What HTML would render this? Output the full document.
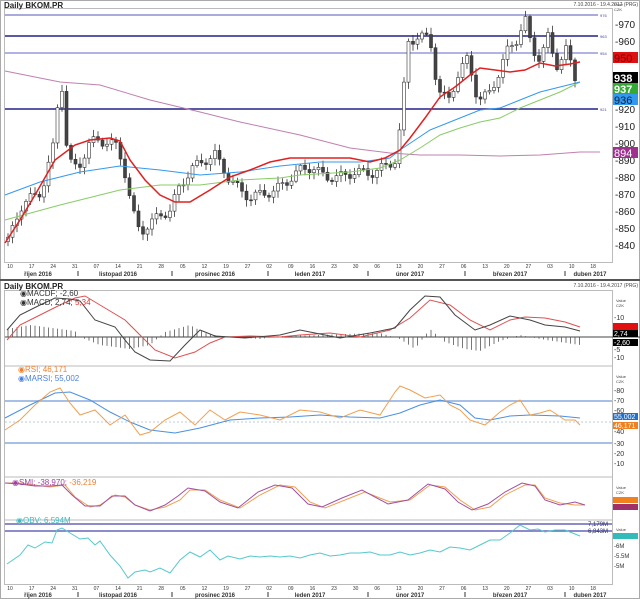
<!DOCTYPE html>
<html><head><meta charset="utf-8"><style>
body{margin:0;background:#fff;width:640px;height:599px;overflow:hidden;font-family:"Liberation Sans",sans-serif}
svg{display:block}
text{font-family:"Liberation Sans",sans-serif}
</style></head><body>
<svg id="s" width="640" height="599" xmlns="http://www.w3.org/2000/svg">
<rect width="640" height="599" fill="#fff"/>
<rect x="0.5" y="0.5" width="639" height="598" fill="none" stroke="#aaa"/>
<line x1="0" y1="280" x2="640" y2="280" stroke="#555" stroke-width="2"/>
<rect x="4.5" y="8.5" width="608" height="254" fill="none" stroke="#bbb"/>
<rect x="4.5" y="290.5" width="608" height="294" fill="none" stroke="#bbb"/>
<line x1="4" y1="366" x2="612" y2="366" stroke="#bbb"/>
<line x1="4" y1="477" x2="612" y2="477" stroke="#bbb"/>
<line x1="4" y1="520" x2="612" y2="520" stroke="#bbb"/>
<text x="4" y="8" font-size="8" font-weight="bold" fill="#222">Daily BKOM.PR</text>
<text x="4" y="289" font-size="8" font-weight="bold" fill="#222">Daily BKOM.PR</text>
<text x="638" y="6" font-size="5" fill="#444" text-anchor="end">7.10.2016 - 19.4.2017 (PRG)</text>
<text x="638" y="287" font-size="5" fill="#444" text-anchor="end">7.10.2016 - 19.4.2017 (PRG)</text>
<line x1="5" y1="15" x2="598" y2="15" stroke="#5555bb" stroke-width="1"/>
<line x1="5" y1="36" x2="598" y2="36" stroke="#222288" stroke-width="1.5"/>
<line x1="5" y1="53" x2="598" y2="53" stroke="#6666cc" stroke-width="1"/>
<line x1="5" y1="109" x2="598" y2="109" stroke="#222288" stroke-width="1.5"/>
<text x="600" y="17" font-size="4" fill="#44a">976</text>
<text x="600" y="38" font-size="4" fill="#44a">963</text>
<text x="600" y="55" font-size="4" fill="#44a">954</text>
<text x="600" y="111" font-size="4" fill="#44a">921</text>
<g id="price"></g>
<g id="axis"></g>
<polyline fill="none" stroke="#c080b0" stroke-width="1" points="5,71 60,82 100,85 150,100 200,112 240,122 300,135 350,148 390,153 420,155 460,155 500,156 540,155 580,152 600,152"/>
<polyline fill="none" stroke="#88cc66" stroke-width="1" points="5,220 60,205 120,190 160,185 200,185 240,180 280,178 300,175 350,172 380,168 400,160 420,148 440,135 460,128 480,122 500,118 520,108 540,100 560,92 580,82"/>
<polyline fill="none" stroke="#3399ee" stroke-width="1" points="5,195 40,182 80,172 120,166 160,170 200,175 240,172 280,166 320,162 360,162 390,158 400,150 415,140 430,130 445,124 460,118 480,110 500,108 520,100 540,92 560,87 580,82"/>
<polyline fill="none" stroke="#e02020" stroke-width="1.5" points="5,243 20,220 35,195 55,160 75,145 90,140 110,138 120,141 130,160 145,180 160,195 175,202 190,202 210,190 230,177 250,170 270,162 290,158 310,158 330,158 350,158 370,162 385,158 400,150 410,138 425,118 440,97 455,87 470,75 480,68 495,70 510,72 525,70 540,63 555,66 570,64 580,62"/>
<g font-size="10" fill="#222">
<text x="615" y="28">-970</text><text x="615" y="45">-960</text><text x="615" y="113">-920</text><text x="615" y="130">-910</text><text x="615" y="147">-900</text><text x="615" y="164">-890</text><text x="615" y="181">-880</text><text x="615" y="198">-870</text><text x="615" y="215">-860</text><text x="615" y="232">-850</text><text x="615" y="249">-840</text>
</g>
<text x="614" y="6" font-size="4" fill="#444">Price</text><text x="614" y="11" font-size="4" fill="#444">CZK</text>
<rect x="613" y="52" width="25" height="11" fill="#dd1111"/><text x="614" y="62" font-size="11" fill="#800">950</text>
<rect x="613" y="72" width="25" height="11" fill="#000"/><text x="614" y="82" font-size="11" fill="#fff" font-weight="bold">938</text>
<rect x="613" y="83" width="25" height="11" fill="#33aa33"/><text x="614" y="93" font-size="11" fill="#fff" font-weight="bold">937</text>
<rect x="613" y="94" width="25" height="11" fill="#3399ee"/><text x="614" y="104" font-size="11" fill="#024">936</text>
<rect x="613" y="147" width="25" height="11" fill="#a03090"/><text x="614" y="157" font-size="11" fill="#fff">894</text>

<line x1="5" y1="337" x2="640" y2="337" stroke="#444"/>
<g id="hist"></g>
<polyline fill="none" stroke="#e05050" stroke-width="1" points="7,340 20,325 40,315 60,305 75,298 85,296 100,305 125,320 140,335 155,350 175,358 195,352 210,343 225,337 250,336 280,337 300,335 330,333 360,337 390,330 410,318 430,300 450,305 470,320 490,330 510,320 525,317 545,318 565,322 580,327"/>
<polyline fill="none" stroke="#444" stroke-width="1" points="7,330 20,315 40,305 55,298 70,299 80,301 95,320 115,327 125,340 135,352 150,360 170,361 185,345 200,330 215,336 245,338 280,335 300,330 320,334 340,338 370,333 395,328 410,310 425,296 440,297 455,315 475,330 490,325 510,316 530,320 545,325 565,327 580,331"/>
<text x="20" y="296" font-size="8" fill="#333">◉MACDF; -2,60</text>
<text x="20" y="305" font-size="8" fill="#333">◉MACD; 2,74; <tspan fill="#e03030">5,34</tspan></text>
<text x="616" y="302" font-size="4" fill="#444">Value</text><text x="616" y="307" font-size="4" fill="#444">CZK</text>
<text x="614" y="320" font-size="7" fill="#333">-10</text>
<rect x="613" y="323" width="25" height="7" fill="#e01010"/>
<rect x="613" y="330" width="25" height="7" fill="#000"/><text x="614" y="336" font-size="7" fill="#fff">2,74</text>
<rect x="613" y="339" width="25" height="7" fill="#000"/><text x="614" y="345" font-size="7" fill="#fff">-2,60</text>
<text x="614" y="352" font-size="7" fill="#333">-5</text><text x="614" y="360" font-size="7" fill="#333">-10</text>

<line x1="5" y1="401" x2="612" y2="401" stroke="#88aadd" stroke-width="1.5"/>
<line x1="5" y1="443" x2="612" y2="443" stroke="#88aadd" stroke-width="1.5"/>
<line x1="5" y1="422" x2="612" y2="422" stroke="#bcd" stroke-dasharray="2,2"/>
<polyline fill="none" stroke="#4a90e0" stroke-width="1" points="5,418 30,405 55,393 70,392 90,400 110,412 130,422 150,430 175,433 200,428 230,420 260,418 290,417 320,415 350,417 380,418 400,413 420,405 440,400 460,405 475,418 490,420 510,416 530,415 560,416 580,418"/>
<polyline fill="none" stroke="#f0a050" stroke-width="1" points="5,430 20,420 35,405 50,392 60,388 70,403 80,415 95,410 110,425 125,415 140,435 150,432 165,420 180,412 195,425 210,410 225,420 240,412 260,415 280,420 300,410 320,412 340,418 360,410 380,415 395,392 400,386 410,390 425,398 440,395 450,405 460,410 470,420 485,425 500,412 510,405 520,400 530,415 540,413 550,410 565,420 575,420 580,425"/>
<text x="18" y="372" font-size="8" fill="#f08030">◉RSI; 46,171</text>
<text x="18" y="381" font-size="8" fill="#4a80e0">◉MARSI; 55,002</text>
<text x="616" y="378" font-size="4" fill="#444">Value</text><text x="616" y="383" font-size="4" fill="#444">CZK</text>
<g font-size="7" fill="#333"><text x="614" y="393">-80</text><text x="614" y="403">-70</text><text x="614" y="413">-60</text><text x="614" y="434">-40</text><text x="614" y="446">-30</text><text x="614" y="456">-20</text><text x="614" y="466">-10</text></g>
<rect x="613" y="413" width="25" height="7" fill="#1e6fd0"/><text x="614" y="419" font-size="7" fill="#fff">55,002</text>
<rect x="613" y="422" width="25" height="7" fill="#f08020"/><text x="614" y="428" font-size="7" fill="#fff">46,171</text>

<polyline fill="none" stroke="#f0a050" stroke-width="1" points="5,483 20,483 35,485 50,487 65,485 75,497 90,507 100,505 115,495 125,497 135,505 150,510 165,507 180,500 190,490 205,490 220,500 240,508 260,495 280,485 295,487 310,502 325,508 345,500 365,492 390,502 410,500 430,485 445,487 460,500 475,510 490,507 505,495 525,485 535,485 545,498 560,503 575,505 585,505"/>
<polyline fill="none" stroke="#a050a0" stroke-width="1" points="5,483 20,484 35,486 50,486 62,485 72,495 85,506 100,506 112,496 125,496 135,505 150,511 165,505 178,496 188,488 205,491 220,502 238,508 258,492 275,485 292,488 308,504 322,507 342,498 362,490 388,504 408,500 428,484 445,489 458,502 472,510 488,504 505,492 522,483 535,486 545,500 560,505 575,502 585,505"/>
<text x="12" y="485" font-size="8" fill="#a040a0">◉SMI; -38,970; <tspan fill="#f08030">-36,219</tspan></text>
<text x="616" y="489" font-size="4" fill="#444">Value</text><text x="616" y="494" font-size="4" fill="#444">CZK</text>
<rect x="613" y="497" width="25" height="6" fill="#f08020"/><rect x="613" y="504" width="25" height="6" fill="#a0306a"/>

<line x1="5" y1="524" x2="612" y2="524" stroke="#6666bb" stroke-width="1.5"/>
<line x1="5" y1="531" x2="612" y2="531" stroke="#6666bb" stroke-width="1.5"/>
<text x="588" y="526" font-size="6" fill="#336">7,179M</text><text x="588" y="533" font-size="6" fill="#336">6,843M</text>
<polyline fill="none" stroke="#55c8cc" stroke-width="1" points="7,564 20,555 28,545 35,548 45,542 52,543 57,530 62,528 70,533 80,539 88,538 95,545 100,541 110,555 120,566 128,578 135,572 145,570 150,572 160,568 170,573 180,560 190,552 200,557 210,550 220,560 228,556 240,559 250,556 260,557 270,556 280,557 290,556 300,558 310,555 320,553 330,556 340,555 350,553 360,553 370,552 380,555 390,555 400,552 410,555 420,553 430,550 440,552 450,547 460,548 470,550 480,545 490,540 500,540 510,533 520,525 530,530 538,529 545,532 555,530 565,530 575,534 580,536"/>
<text x="16" y="523" font-size="8" fill="#40b8c0">◉OBV; 6,594M</text>
<text x="616" y="531" font-size="4" fill="#444">Value</text>
<rect x="613" y="533" width="25" height="6" fill="#33bbbb"/>
<g font-size="6" fill="#333"><text x="614" y="548">-6M</text><text x="614" y="558">-5.5M</text><text x="614" y="568">-5M</text></g>
<g id="axis2"></g>
</svg>
<script>
(function(){
var NS="http://www.w3.org/2000/svg";
function el(p,t,a){var e=document.createElementNS(NS,t);for(var k in a)e.setAttribute(k,a[k]);p.appendChild(e);return e}
function py(p){return 24+(970-p)*1.7}
var pts=[[8,842],[20,862],[32,868],[42,872],[50,890],[56,905],[60,950],[66,900],[72,885],[80,888],[90,900],[98,902],[108,900],[118,898],[126,880],[132,860],[140,848],[150,852],[160,858],[170,860],[180,875],[192,885],[205,890],[215,893],[228,880],[240,872],[250,868],[262,870],[275,872],[288,878],[300,884],[312,886],[325,880],[340,880],[355,883],[370,882],[385,886],[395,890],[402,915],[407,960],[418,962],[430,962],[438,930],[448,925],[458,940],[468,950],[478,925],[488,928],[498,940],[508,955],[518,962],[525,973],[532,955],[540,950],[548,962],[556,945],[566,955],[575,938]];
var g=document.getElementById('price');var prev=pts[0][1];
for(var x=8;x<=578;x+=4.5){var i=0;while(i<pts.length-2&&pts[i+1][0]<x)i++;var a=pts[i],b=pts[i+1];var t=Math.max(0,Math.min(1,(x-a[0])/(b[0]-a[0])));var c=a[1]+(b[1]-a[1])*t+Math.sin(x*1.7)*3;
var o=prev;var hi=Math.max(o,c)+1+Math.abs(Math.sin(x*2.3))*3,lo=Math.min(o,c)-1-Math.abs(Math.cos(x*1.3))*3;
el(g,'line',{x1:x,x2:x,y1:py(hi),y2:py(lo),stroke:'#333','stroke-width':0.8});
var tp=py(Math.max(o,c)),h=Math.max(1,Math.abs(py(o)-py(c)));
el(g,'rect',{x:x-1.5,y:tp,width:3,height:h,fill:c>=o?'#fff':'#444',stroke:'#333','stroke-width':0.6});prev=c;}
var hg=document.getElementById('hist');
var hv=[[7,-8],[30,-12],[60,-8],[75,-6],[80,0],[100,8],[130,12],[150,8],[165,-5],[190,-12],[205,-4],[220,-1],[260,2],[280,-1],[320,-2],[345,-3],[380,-4],[400,2],[415,12],[430,-8],[445,5],[465,12],[480,14],[500,4],[520,-2],[540,2],[560,5],[580,8]];
for(var x=8;x<=580;x+=4.5){var i=0;while(i<hv.length-2&&hv[i+1][0]<x)i++;var a=hv[i],b=hv[i+1];var v=a[1]+(b[1]-a[1])*Math.max(0,Math.min(1,(x-a[0])/(b[0]-a[0])));el(hg,'line',{x1:x,x2:x,y1:337,y2:337+v,stroke:'#555','stroke-width':0.8});}
var lab=['10','17','24','31','07','14','21','28','05','12','19','27','02','09','16','23','30','06','13','20','27','06','13','20','27','03','10','18'];
function axis(id,yy,yy2){var ag=document.getElementById(id);for(var i=0;i<lab.length;i++){var x=10+i*21.6;var t=el(ag,'text',{x:x,y:yy,'font-size':5,fill:'#333','text-anchor':'middle'});t.textContent=lab[i];}
var m=[['říjen 2016',38],['listopad 2016',118],['prosinec 2016',215],['leden 2017',310],['únor 2017',410],['březen 2017',510],['duben 2017',590]];
m.forEach(function(q){var t=el(ag,'text',{x:q[1],y:yy2,'font-size':6,'font-weight':'bold',fill:'#333','text-anchor':'middle'});t.textContent=q[0];});
[78,172,268,368,465,565].forEach(function(x){el(ag,'line',{x1:x,x2:x,y1:yy2-5,y2:yy2,stroke:'#333'});});}
axis('axis',268,276);axis('axis2',590,597);
})();
</script>
</body></html>
